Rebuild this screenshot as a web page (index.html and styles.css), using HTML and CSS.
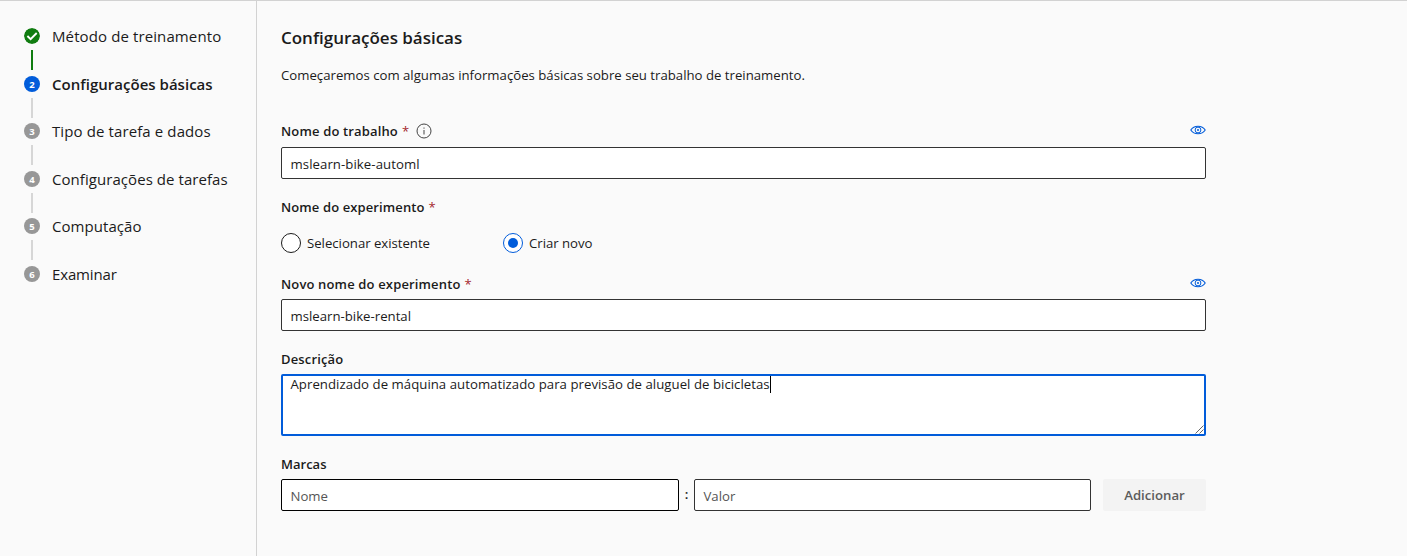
FILE: index.html
```html
<!DOCTYPE html>
<html lang="pt-BR">
<head>
<meta charset="utf-8">
<title>Configurações básicas</title>
<link rel="stylesheet" href="styles.css">
</head>
<body>
<div class="page">
  <nav class="steps">
    <div class="step done"><div class="rail"><svg class="dot" viewBox="0 0 16 16"><circle cx="8" cy="8" r="8" fill="#107c10"/><path d="M3.400 8 6.600 11.100 12.700 5" fill="none" stroke="#fff" stroke-width="1.900"/></svg><i class="line"></i></div><span class="name n1">Método de treinamento</span></div>
    <div class="step current"><div class="rail"><b class="dot">2</b><i class="line"></i></div><span class="name n2">Configurações básicas</span></div>
    <div class="step"><div class="rail"><b class="dot">3</b><i class="line"></i></div><span class="name n3">Tipo de tarefa e dados</span></div>
    <div class="step"><div class="rail"><b class="dot">4</b><i class="line"></i></div><span class="name n4">Configurações de tarefas</span></div>
    <div class="step"><div class="rail"><b class="dot">5</b><i class="line"></i></div><span class="name n5">Computação</span></div>
    <div class="step"><div class="rail"><b class="dot">6</b></div><span class="name n6">Examinar</span></div>
  </nav>
  <main class="form">
    <h1 class="title">Configurações básicas</h1>
    <p class="intro">Começaremos com algumas informações básicas sobre seu trabalho de treinamento.</p>

    <div class="label job"><span>Nome do trabalho</span><em>*</em>
      <svg class="info" viewBox="0 0 16 16"><circle cx="8" cy="8" r="7" fill="none" stroke="#444" stroke-width="1"/><path d="M8 7v4.5M8 4.5v1.2" stroke="#444" stroke-width="1"/></svg>
      <svg class="eye" viewBox="0 0 16 10"><path d="M.8 5C2.4 2.5 5 1.2 8 1.2S13.600 2.500 15.200 5C13.600 7.500 11 8.800 8 8.800S2.400 7.500.8 5Z" fill="none" stroke="#015cda" stroke-width="1.100"/><circle cx="8" cy="5" r="2.900" fill="none" stroke="#015cda"/><circle cx="8" cy="5" r="1" fill="#015cda"/></svg>
    </div>
    <div class="input"><span class="v1">mslearn-bike-automl</span></div>

    <div class="label experiment"><span>Nome do experimento</span><em>*</em></div>
    <div class="radios">
      <div class="radio"><i class="ring"></i><span class="r1">Selecionar existente</span></div>
      <div class="radio on"><i class="ring"></i><span class="r2">Criar novo</span></div>
    </div>

    <div class="label new-name"><span>Novo nome do experimento</span><em>*</em>
      <svg class="eye" viewBox="0 0 16 10"><path d="M.8 5C2.4 2.5 5 1.2 8 1.2S13.600 2.500 15.200 5C13.600 7.500 11 8.800 8 8.800S2.400 7.500.8 5Z" fill="none" stroke="#015cda" stroke-width="1.100"/><circle cx="8" cy="5" r="2.900" fill="none" stroke="#015cda"/><circle cx="8" cy="5" r="1" fill="#015cda"/></svg>
    </div>
    <div class="input"><span class="v2">mslearn-bike-rental</span></div>

    <div class="label description"><span>Descrição</span></div>
    <div class="area"><span class="v3">Aprendizado de máquina automatizado para previsão de aluguel de bicicletas</span><i class="caret"></i>
      <svg class="grip" viewBox="0 0 9 9"><path d="M.5 8.500 8.500.5M4.500 8.500l4-4" stroke="#555" stroke-width=".9"/></svg>
    </div>

    <div class="label tags"><span>Marcas</span></div>
    <div class="tag-row">
      <div class="input active"><span class="hint">Nome</span></div>
      <span class="colon">:</span>
      <div class="input value"><span class="hint">Valor</span></div>
      <div class="button"><span>Adicionar</span></div>
    </div>
  </main>
</div>
</body>
</html>
```
FILE: styles.css
```css
* { box-sizing: border-box; }
body { margin: 0; background: #fafafa; color: #1b1b1b; font: 13.2px/20px "Open Sans", "Noto Sans", sans-serif; }
.page { display: flex; height: 556px; border-top: 1px solid #d2d2d2; overflow: hidden; }

.steps { width: 257px; flex: none; border-right: 1px solid #d2d2d2; padding: 27px 0 0 24px; }
.step { display: flex; gap: 12px; height: 47.6px; }
.rail { width: 16px; display: flex; flex-direction: column; align-items: center; gap: 6px; }
.dot { display: block; width: 16px; height: 16px; flex: none; border-radius: 50%; background: #979797; color: #fff; font-size: 9.5px; line-height: 17px; text-align: center; font-weight: 700; }
.line { width: 2px; height: 20px; background: #d6d6d6; }
.done .dot { background: none; }
.done .line { background: #107c10; }
.current .dot { background: #015cda; }
.name { font-size: 15px; line-height: 17px; white-space: nowrap; letter-spacing: .06px; }
.n1, .n3 { letter-spacing: .11px; }
.n6 { letter-spacing: -.15px; }
.current .name { font-weight: 600; letter-spacing: .02px; }

.form { width: 949px; padding: 25px 0 0 24px; }
.title { margin: 0; font-size: 17px; line-height: 24px; font-weight: 600; letter-spacing: -.02px; }
.intro { margin: 15px 0 0; line-height: 20px; }
.label { display: flex; align-items: center; height: 20px; font-weight: 600; font-size: 13px; letter-spacing: .15px; }
.label em { color: #a4262c; font-style: normal; font-weight: 400; margin-left: 4px; }
.info { width: 16px; height: 16px; margin-left: 7px; }
.eye { width: 16px; height: 10px; margin: 0 0 2px auto; }
.job { margin: 36px 0 6px; }
.input { height: 32px; border: 1px solid #333; border-radius: 2px; background: #fff; padding: 1px 8.5px 0; display: flex; align-items: center; }
.v1 { letter-spacing: .07px; }
.experiment { margin-top: 18px; letter-spacing: .11px; }
.radios { display: flex; margin-top: 16px; height: 20px; }
.radio { width: 222px; display: flex; gap: 6px; letter-spacing: -.02px; }
.ring { width: 20px; height: 20px; border: 1px solid #1b1b1b; border-radius: 50%; background: #fff; display: flex; align-items: center; justify-content: center; }
.on .ring { border-color: #015cda; }
.on .ring::before { content: ""; width: 10px; height: 10px; border-radius: 50%; background: #015cda; }
.new-name { margin: 21px 0 5px; }
.description { margin: 18px 0 5px; }
.area { position: relative; height: 62px; border: 2px solid #015cda; border-radius: 2px; background: #fff; padding: 0 7.5px; display: flex; line-height: 17px; letter-spacing: .035px; }
.caret { width: 1px; height: 17px; background: #000; }
.grip { position: absolute; right: 0; bottom: 0; width: 9px; height: 9px; }
.tags { margin: 18px 0 5px; letter-spacing: 0; }
.tag-row { display: flex; height: 32px; }
.active { width: 398px; border-color: #000; }
.value { width: 397px; }
.hint { color: #555; }
.colon { width: 15px; text-align: center; line-height: 31px; font-weight: 600; }
.button { margin-left: 12px; width: 103px; background: #f3f3f3; border-radius: 2px; color: #5c5c5c; font-weight: 600; display: flex; align-items: center; justify-content: center; }
```
